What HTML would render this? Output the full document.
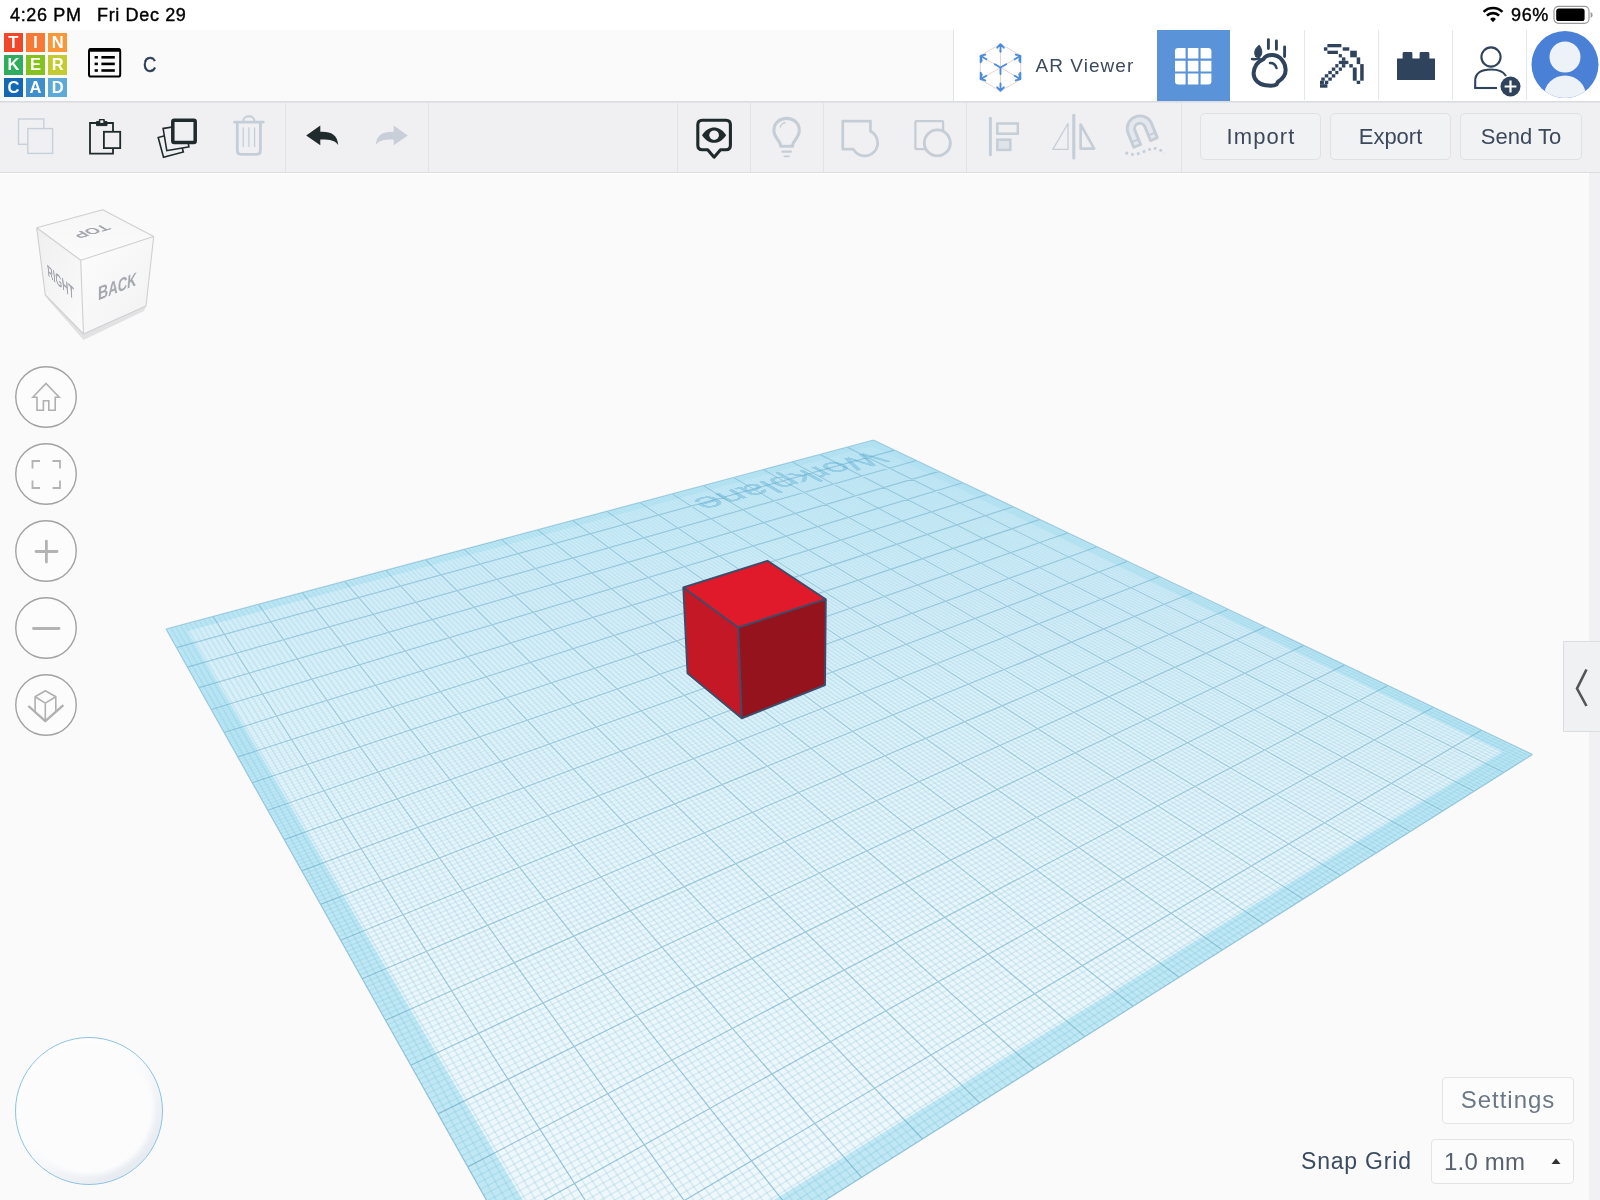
<!DOCTYPE html>
<html lang="en">
<head>
<meta charset="utf-8">
<title>Tinkercad - C</title>
<style>
*{box-sizing:border-box;margin:0;padding:0}
html,body{width:1600px;height:1200px;overflow:hidden;background:#fafafa;font-family:"Liberation Sans",sans-serif;}
body{position:relative}
.abs{position:absolute}
#root{position:absolute;left:0;top:0;width:1600px;height:1200px;overflow:hidden;will-change:transform}
#status{position:absolute;left:0;top:0;width:1600px;height:30px;background:#fff;color:#000;font-size:18px;letter-spacing:0.65px}
#status span{position:absolute;top:5px;line-height:20px;white-space:nowrap;-webkit-text-stroke:0.4px #000}
#header{position:absolute;left:0;top:30px;width:1600px;height:72px;background:#fafafa;border-bottom:1px solid #d9dadc}
#hshadow{position:absolute;left:0;top:101px;width:1600px;height:3px;background:linear-gradient(#d4d6d9,#e6e7ea 60%,#f0f0f2)}
#hright{position:absolute;left:953px;top:0;width:647px;height:71px;background:#fff;border-left:1px solid #e3e4e6}
.hsep{position:absolute;top:0;width:1px;height:70px;background:#e6e7e9}
#toolbar{position:absolute;left:0;top:103px;width:1600px;height:70px;background:#f0f0f2;border-bottom:1px solid #dcdde0}
.tsep{position:absolute;top:0;width:1px;height:69px;background:#e2e3e6}
.btn{position:absolute;top:10px;height:47px;width:121px;border:1px solid #dfe1e5;border-radius:5px;background:#f1f2f4;color:#3c495b;font-size:22px;letter-spacing:0;text-align:center;line-height:45px}
#canvas{position:absolute;left:0;top:173px;width:1600px;height:1027px;background:#fafafa;overflow:hidden}
#rstrip{position:absolute;left:1589px;top:173px;width:11px;height:1027px;background:#f1f1f3}
#toggle{position:absolute;left:1563px;top:641px;width:37px;height:91px;background:#f0f1f3;border:1px solid #dcdde0;border-right:none}
.nav{position:absolute;left:15px;width:62px;height:62px;border-radius:50%;background:#fcfcfc}
.nav svg{position:absolute;left:0;top:0}
.wpwrap{position:absolute;left:0;top:0;width:2000px;height:2000px;transform-origin:0 0;pointer-events:none}
.wptext{position:absolute;left:64px;top:47px;font-size:135px;line-height:135px;color:#4fa3cc;-webkit-text-stroke:2.5px #4fa3cc;opacity:.36;transform:scale(0.965,-1);transform-origin:0 50%;white-space:nowrap;letter-spacing:0}
.vcface{position:absolute;left:0;top:0;width:100px;height:100px;transform-origin:0 0;text-align:center;color:#a4a6ad;font-weight:bold;white-space:nowrap}
#settings{position:absolute;left:1442px;top:1077px;width:132px;height:47px;border:1px solid #e1e3e6;border-radius:4px;background:#fcfcfc;color:#6b7885;font-size:24px;letter-spacing:1px;text-align:center;line-height:44px}
#snaplabel{position:absolute;left:1301px;top:1146px;color:#3b4b60;font-size:23px;letter-spacing:0.8px;line-height:30px;white-space:nowrap}
#snapsel{position:absolute;left:1431px;top:1139px;width:143px;height:45px;border:1px solid #e1e3e6;border-radius:4px;background:#fcfcfc;color:#59626c;font-size:24px;letter-spacing:0.2px;line-height:43px;padding-left:12px}
.lg{position:absolute;width:19.4px;height:19.4px;color:#fff;font-weight:bold;font-size:16.5px;line-height:19.4px;text-align:center}
</style>
</head>
<body>
<div id="root">
<!-- iOS status bar -->
<div id="status">
  <span style="left:10px">4:26 PM</span>
  <span style="left:97px">Fri Dec 29</span>
  <svg class="abs" style="left:1482px;top:6px" width="22" height="17" viewBox="0 0 22 17"><path d="M11 16.2 L8.1 13 A4.2 4.2 0 0 1 13.9 13 Z" fill="#000"/><path d="M4.9 9.6 A8.7 8.7 0 0 1 17.1 9.6" fill="none" stroke="#000" stroke-width="2.6"/><path d="M1.6 5.9 A13.4 13.4 0 0 1 20.4 5.9" fill="none" stroke="#000" stroke-width="2.6"/></svg>
  <span style="left:1511px">96%</span>
  <svg class="abs" style="left:1553px;top:5px" width="42" height="20" viewBox="0 0 42 20"><rect x="1" y="1.3" width="35" height="17" rx="4.5" fill="#fff" stroke="#9a9a9a" stroke-width="1.2"/><rect x="3.2" y="3.6" width="28.4" height="12.4" rx="2.6" fill="#000"/><path d="M37.6 7 A3.2 3.2 0 0 1 37.6 13 Z" fill="#9a9a9a"/></svg>
</div>

<!-- app header -->
<div id="header">
<div class="lg" style="left:3.7px;top:3.1px;background:#f0462a">T</div>
<div class="lg" style="left:25.8px;top:3.1px;background:#f87936">I</div>
<div class="lg" style="left:48px;top:3.1px;background:#f8983b">N</div>
<div class="lg" style="left:3.7px;top:25.4px;background:#2eae5c">K</div>
<div class="lg" style="left:25.8px;top:25.4px;background:#84c31d">E</div>
<div class="lg" style="left:48px;top:25.4px;background:#c4cb30">R</div>
<div class="lg" style="left:3.7px;top:47.8px;background:#1468b3">C</div>
<div class="lg" style="left:25.8px;top:47.8px;background:#3f8fca">A</div>
<div class="lg" style="left:48px;top:47.8px;background:#5caad6">D</div>
<svg class="abs" style="left:86px;top:16px" width="38" height="34" viewBox="0 0 38 34">
  <rect x="3" y="3" width="31.2" height="27.6" rx="2.2" fill="none" stroke="#000" stroke-width="2"/>
  <rect x="3" y="2.2" width="31.2" height="3.6" rx="1" fill="#000"/>
  <rect x="8.6" y="10" width="3.3" height="2.6" fill="#000"/><rect x="15.4" y="10" width="13.4" height="2.6" fill="#000"/>
  <rect x="8.6" y="16.6" width="3.3" height="2.6" fill="#000"/><rect x="15.4" y="16.6" width="13.4" height="2.6" fill="#000"/>
  <rect x="8.6" y="23.2" width="3.3" height="2.6" fill="#000"/><rect x="15.4" y="23.2" width="13.4" height="2.6" fill="#000"/>
</svg>
<div class="abs" style="left:142.500px;top:22px;font-size:22.500px;line-height:26px;color:#2b3c58;-webkit-text-stroke:0.45px #2b3c58;transform:scaleX(0.82);transform-origin:0 50%">C</div>

<div id="hright">
  <!-- AR viewer icon -->
  <svg class="abs" style="left:22px;top:9.5px" width="49" height="55" viewBox="0 0 52 58">
    <g fill="none" stroke="#e3cfd0" stroke-width="1">
      <path d="M26 4 L4.5 16.5 L4.5 41.5 L26 54 L47.500 41.5 L47.5 16.5 Z"/>
      <path d="M26 29 L26 54 M26 29 L4.5 16.5 M26 29 L47.5 16.5 M26 4 L26 29 M4.5 41.5 L26 29 L47.5 41.5"/>
    </g>
    <g fill="none" stroke="#4c8ddb" stroke-width="2" stroke-linecap="round" stroke-linejoin="round">
      <path d="M26 4.600 L26 12 M22.5 8 L26 4.300 L29.5 8"/>
      <path d="M26 53.400 L26 46 M22.5 50 L26 53.700 L29.5 50"/>
      <path d="M5 17 L5 23.500 M5 41 L5 34.500 M47 17 L47 23.500 M47 41 L47 34.500"/>
      <path d="M5 16.800 L11 20.300 M5 16.800 L9.800 15.300 M5 16.800 L6.100 21.800"/>
      <path d="M47 16.800 L41 20.300 M47 16.800 L42.200 15.300 M47 16.800 L45.900 21.800"/>
      <path d="M5 41.200 L11 37.700 M5 41.200 L9.800 42.700 M5 41.200 L6.100 36.200"/>
      <path d="M47 41.200 L41 37.700 M47 41.200 L42.200 42.700 M47 41.200 L45.900 36.200"/>
      <path d="M26 29 L26 36 M26 29 L20 25.500 M26 29 L32 25.500"/>
      <path d="M26 12 L26 12.100"/>
    </g>
  </svg>
  <div class="abs" style="left:81.5px;top:23px;font-size:19px;letter-spacing:1.05px;line-height:26px;color:#3c4a5e;white-space:nowrap">AR Viewer</div>
  <!-- active grid button -->
  <div class="abs" style="left:203px;top:0;width:73px;height:71px;background:#5b93d9">
    <svg class="abs" style="left:17px;top:17px" width="38" height="38" viewBox="0 0 38 38">
      <rect x="1" y="1" width="36.4" height="36.4" rx="3.2" fill="#fff"/>
      <path d="M12.700 0 V38 M25.500 0 V38 M0 12.700 H38 M0 25.500 H38" stroke="#5b93d9" stroke-width="2.2"/>
    </svg>
  </div>
  <div class="hsep" style="left:350px"></div>
  <div class="hsep" style="left:424px"></div>
  <div class="hsep" style="left:498px"></div>
  <div class="hsep" style="left:572px"></div>
  <!-- apple / hand icon -->
  <svg class="abs" style="left:293px;top:6px" width="46" height="56" viewBox="0 0 46 56">
    <g fill="none" stroke="#2f435c" stroke-linecap="round" stroke-linejoin="round">
      <path d="M16.2 23.3 C11 25 6.500 31 6.600 37.500 C6.800 44 12 48.500 18.500 49.300 C22.500 49.800 27 50.200 29.300 48.600 C30.400 47.800 30.200 46.300 31.400 45.500 C35.500 43 38.800 39 38.600 33.500 C38.300 26 33 19.700 26 19.100 C21.500 18.800 18 20.500 16.200 23.300 Z" stroke-width="4"/>
      <path d="M21.400 3.600 V12.600 M29.400 5 V13.200 M37.600 11 V20.500" stroke-width="2.900"/>
      <path d="M23 27 C26 26.800 28.500 28.800 29.500 32" stroke-width="2.500"/>
      <path d="M5 23 C8 23.500 10.500 23.200 12.500 22.500" stroke-width="2.300"/>
    </g>
    <path d="M12.300 9.200 C8.500 12 6.300 15.500 8.800 21 L12.200 21.600 C15.500 18.500 15.800 14.500 12.300 9.200 Z" fill="#2f435c" stroke="#2f435c" stroke-width="1" stroke-linejoin="round"/>
  </svg>
  <!-- pickaxe (pixel art) -->
  <svg class="abs" style="left:366.4px;top:14.0px" width="46" height="46" viewBox="0 0 46 46"><g fill="#2f435c"><rect x="7.4" y="0.0" width="14.0" height="3.3"/><rect x="3.9" y="3.3" width="3.5" height="3.4"/><rect x="22.7" y="3.3" width="6.6" height="3.4"/><rect x="7.4" y="6.7" width="10.5" height="3.3"/><rect x="30.2" y="6.7" width="6.6" height="6.6"/><rect x="18.8" y="10.1" width="3.1" height="3.3"/><rect x="21.9" y="13.4" width="3.5" height="3.4"/><rect x="36.7" y="13.4" width="3.5" height="6.7"/><rect x="18.8" y="16.8" width="9.6" height="3.3"/><rect x="15.3" y="20.1" width="3.1" height="3.4"/><rect x="21.9" y="20.1" width="3.5" height="3.4"/><rect x="29.3" y="20.1" width="3.5" height="3.4"/><rect x="40.2" y="20.1" width="3.5" height="16.6"/><rect x="11.8" y="23.5" width="3.5" height="3.3"/><rect x="18.8" y="23.5" width="3.1" height="3.3"/><rect x="32.8" y="23.5" width="3.9" height="13.2"/><rect x="8.3" y="26.9" width="3.5" height="3.3"/><rect x="15.3" y="26.9" width="3.1" height="3.3"/><rect x="4.8" y="30.2" width="3.5" height="3.3"/><rect x="11.8" y="30.2" width="3.5" height="3.3"/><rect x="1.3" y="33.5" width="3.5" height="3.2"/><rect x="8.3" y="33.5" width="3.5" height="3.2"/><rect x="36.7" y="36.7" width="3.5" height="3.3"/><rect x="0.0" y="36.7" width="3.9" height="3.5"/><rect x="4.8" y="36.7" width="3.5" height="3.3"/><rect x="0.0" y="40.2" width="7.4" height="3.5"/></g></svg>
  <!-- brick -->
  <svg class="abs" style="left:441px;top:20px" width="42" height="32" viewBox="0 0 42 32">
    <path d="M2 8.500 H7.600 V3.400 Q7.600 2 9 2 H16 Q17.400 2 17.400 3.400 V8.500 H24.600 V3.400 Q24.600 2 26 2 H33 Q34.400 2 34.400 3.400 V8.500 H40 V30 H2 Z" fill="#2f435c"/>
  </svg>
  <!-- add person -->
  <svg class="abs" style="left:516px;top:12px" width="56" height="56" viewBox="0 0 56 56">
    <g fill="none" stroke="#2f435c" stroke-width="2.1">
      <circle cx="21" cy="15" r="9.600"/>
      <path d="M5.200 46 V39 C5.200 31.500 11 27.500 21 27.500 C28.500 27.500 33.700 29.800 36 34"/>
      <path d="M4.200 46 H27"/>
    </g>
    <circle cx="40.500" cy="44.500" r="10" fill="#2f435c"/>
    <path d="M40.500 38.600 V50.400 M34.600 44.500 H46.400" stroke="#fff" stroke-width="2.200"/>
  </svg>
  <!-- avatar -->
  <svg class="abs" style="left:576px;top:0" width="70" height="70" viewBox="0 0 70 70">
    <defs><clipPath id="avc"><circle cx="35" cy="34.500" r="33.500"/></clipPath></defs>
    <circle cx="35" cy="34.500" r="33.500" fill="#4a80d6"/>
    <g clip-path="url(#avc)" fill="#edf1f8">
      <circle cx="35" cy="27" r="15.500"/>
      <ellipse cx="35" cy="66" rx="21" ry="20.500"/>
    </g>
  </svg>
</div>

</div>
<div id="hshadow"></div>

<!-- toolbar -->
<div id="toolbar">
<div class="tsep" style="left:285px"></div>
<div class="tsep" style="left:428px"></div>
<div class="tsep" style="left:677px"></div>
<div class="tsep" style="left:750px"></div>
<div class="tsep" style="left:823px"></div>
<div class="tsep" style="left:966px"></div>
<div class="tsep" style="left:1181px"></div>
<svg class="abs" style="left:0;top:0" width="1200" height="70" viewBox="0 0 1200 70">
  <!-- copy (disabled) -->
  <g fill="#f0f0f2" stroke="#c7d0da" stroke-width="1.4">
    <rect x="18.500" y="16" width="25.300" height="25.300"/>
    <rect x="27.800" y="25.600" width="24.800" height="24.800"/>
  </g>
  <!-- paste -->
  <g fill="#f0f0f2" stroke="#1f2a2d" stroke-width="1.8" stroke-linejoin="miter">
    <path d="M96 20 H90 V50.600 H113 V20 H107"/>
    <path d="M96.500 22.600 V18.600 H99.300 V16.500 H104.300 V18.600 H107 V22.600 Z" fill="#1f2a2d" stroke-width="1"/>
    <rect x="100.300" y="17.300" width="3" height="2.600" fill="#f0f0f2" stroke="none"/>
    <rect x="103.900" y="28.800" width="16.300" height="16.300"/>
  </g>
  <!-- duplicate -->
  <g fill="#f0f0f2" stroke="#1f2a2d" stroke-width="1.6">
    <rect x="160.500" y="31.500" width="20.500" height="20.500" transform="rotate(-15 170.700 41.700)"/>
    <rect x="164.800" y="23.500" width="22.400" height="22.400" transform="rotate(-9.500 176 34.700)"/>
    <rect x="172.800" y="17.200" width="22.400" height="22.400" stroke-width="3.500" rx="1.500"/>
  </g>
  <!-- trash (disabled) -->
  <g fill="none" stroke="#c4ced9" stroke-linecap="round">
    <path d="M234.500 19.200 H263.200" stroke-width="2.800"/>
    <path d="M243.300 18 C243.300 11.800 254.400 11.800 254.400 18" stroke-width="2"/>
    <path d="M237.300 21 V47.500 Q237.300 51.300 241 51.300 H256.700 Q260.400 51.300 260.400 47.500 V21" stroke-width="2.800"/>
    <path d="M243.200 25 V43.500 M248.900 25 V43.500 M254.600 25 V43.500" stroke-width="1.300"/>
  </g>
  <!-- undo -->
  <path d="M306.200 32.500 L320.300 22.500 V28.700 C331 28.300 337.500 31.500 338.200 42 C335 37.500 330.500 36.400 320.300 36.500 V42.300 Z" fill="#1f2b2d"/>
  <!-- redo (disabled) -->
  <path d="M407.800 32.500 L393.700 22.500 V28.700 C383 28.300 376.500 31.500 375.800 42 C379 37.500 383.500 36.400 393.700 36.500 V42.300 Z" fill="#c8cfd9"/>
  <!-- notes / eye -->
  <g>
    <path d="M702.300 17.300 H725.900 Q730.400 17.300 730.400 21.800 V42.300 Q730.400 46.800 725.900 46.800 H720.500 L714.100 54.200 L707.700 46.800 H702.300 Q697.800 46.800 697.800 42.300 V21.800 Q697.800 17.300 702.300 17.300 Z" fill="#f0f0f2" stroke="#1f2a2d" stroke-width="3.100" stroke-linejoin="round"/>
    <path d="M702 32.200 C706 26.500 710 24.600 714.100 24.600 C718.200 24.600 722.200 26.500 726.200 32.200 C722.200 37.900 718.200 39.800 714.100 39.800 C710 39.800 706 37.900 702 32.200 Z" fill="#1f2a2d"/>
    <circle cx="714.100" cy="32.200" r="4.800" fill="#f0f0f2"/>
  </g>
  <!-- lightbulb (disabled) -->
  <g fill="none" stroke="#c5cdd7" stroke-linecap="round">
    <path d="M780.700 43.300 C780.700 37.500 773.900 35.300 773.900 27.300 C773.900 20.300 779.700 15.400 786.600 15.400 C793.500 15.400 799.300 20.300 799.300 27.300 C799.300 35.300 792.500 37.500 792.500 43.300 Z" stroke-width="3.100" stroke-linejoin="round"/>
    <path d="M780.300 24 C781.100 21.600 783 20 785.300 19.600" stroke-width="1.300"/>
    <path d="M782.300 48.700 H790.900" stroke-width="2.300"/><path d="M784.300 53.300 H788.900" stroke-width="1.800"/>
  </g>
  <!-- group (disabled) -->
  <path d="M842.750 18.200 H870.450 V28.260 A13 13 0 1 1 853.280 46.200 H842.750 Z" fill="none" stroke="#c5cdd7" stroke-width="2.700" stroke-linejoin="round"/>
  <!-- ungroup (disabled) -->
  <g fill="#f0f0f2" stroke="#c5cdd7">
    <rect x="915.400" y="18.200" width="27.700" height="28" stroke-width="2.300" rx="1"/>
    <circle cx="937.300" cy="39.900" r="13" stroke-width="2.900"/>
  </g>
  <!-- align (disabled) -->
  <g fill="none" stroke="#c5cdd7" stroke-width="2.500">
    <path d="M990.400 15.300 V51.700" stroke-linecap="round" stroke-width="3"/>
    <rect x="997.300" y="20.500" width="20.500" height="10.200"/>
    <rect x="997.300" y="36.700" width="13" height="10.200" fill="#dfe4ea"/>
  </g>
  <!-- mirror (disabled) -->
  <g fill="none" stroke="#c5cdd7" stroke-linejoin="round">
    <path d="M1073.800 12.300 V55" stroke-width="3.100" stroke-linecap="round"/>
    <path d="M1052.800 46.400 H1068 V20.500 Z" stroke-width="1.300"/>
    <path d="M1080.600 21.500 V45.600 H1094.200 Z" stroke-width="2.600"/>
  </g>
  <!-- cruise / magnet (disabled) -->
  <g fill="none" stroke="#c5cdd7">
    <g transform="translate(-3.500 -2) rotate(-22 1144 29)">
      <path d="M1131.300 42.500 V27.500 A12.700 12.700 0 0 1 1156.700 27.500 V42.500 H1149.300 V27.500 A5.300 5.300 0 0 0 1138.700 27.500 V42.500 Z" stroke-width="2.900" stroke-linejoin="round" fill="#e4e8ee"/>
      <path d="M1131.300 37 H1138.700 M1149.300 37 H1156.700" stroke-width="2"/>
    </g>
    <path d="M1125.500 49.500 C1134 54.500 1144 48 1152 45.500 C1157 44.500 1161.500 47.500 1164.500 50.500" stroke-width="2.700" stroke-dasharray="2.700 3.200" stroke-linecap="butt"/>
  </g>
</svg>
<div class="btn" style="left:1200px;letter-spacing:1.100px;padding-left:1px">Import</div>
<div class="btn" style="left:1330px">Export</div>
<div class="btn" style="left:1460px;width:122px">Send To</div>

</div>

<!-- 3D canvas -->
<div id="canvas">
<svg class="abs" style="left:0;top:-173px" width="1600" height="1373" viewBox="0 0 1600 1373">
<defs><linearGradient id="pg" gradientUnits="userSpaceOnUse" x1="0" y1="440" x2="0" y2="1373"><stop offset="0.0000" stop-color="#bee7f5"/><stop offset="0.0322" stop-color="#c3e8f6"/><stop offset="0.0643" stop-color="#c7eaf7"/><stop offset="0.1072" stop-color="#ccecf7"/><stop offset="0.1501" stop-color="#d1edf8"/><stop offset="0.2036" stop-color="#d6eff9"/><stop offset="0.2680" stop-color="#dcf2fa"/><stop offset="0.3430" stop-color="#e1f3fa"/><stop offset="0.4287" stop-color="#e6f5fb"/><stop offset="0.5252" stop-color="#eaf6fb"/><stop offset="0.6324" stop-color="#ecf7fb"/><stop offset="0.7395" stop-color="#eef7fb"/><stop offset="0.8682" stop-color="#eff7fa"/><stop offset="1.0000" stop-color="#f1f7fa"/></linearGradient>
<linearGradient id="bg" gradientUnits="userSpaceOnUse" x1="0" y1="440" x2="0" y2="1373"><stop offset="0" stop-color="#48bee0" stop-opacity="0.07"/><stop offset="0.12" stop-color="#48bee0" stop-opacity="0.13"/><stop offset="0.3" stop-color="#48bee0" stop-opacity="0.25"/><stop offset="1" stop-color="#48bee0" stop-opacity="0.29"/></linearGradient>
<linearGradient id="mgu" gradientUnits="userSpaceOnUse" x1="0" y1="440" x2="0" y2="1373"><stop offset="0.0000" stop-color="#6cb4d0" stop-opacity="0.08"/><stop offset="0.0643" stop-color="#6cb4d0" stop-opacity="0.11"/><stop offset="0.1286" stop-color="#6cb4d0" stop-opacity="0.14"/><stop offset="0.2036" stop-color="#6cb4d0" stop-opacity="0.17"/><stop offset="0.2787" stop-color="#6cb4d0" stop-opacity="0.20"/><stop offset="0.3859" stop-color="#6cb4d0" stop-opacity="0.21"/><stop offset="0.4930" stop-color="#6cb4d0" stop-opacity="0.21"/><stop offset="0.6538" stop-color="#6cb4d0" stop-opacity="0.21"/><stop offset="0.8146" stop-color="#6cb4d0" stop-opacity="0.20"/><stop offset="1.0000" stop-color="#6cb4d0" stop-opacity="0.20"/></linearGradient>
<linearGradient id="mgv" gradientUnits="userSpaceOnUse" x1="0" y1="440" x2="0" y2="1373"><stop offset="0.0000" stop-color="#6cb4d0" stop-opacity="0.00"/><stop offset="0.0643" stop-color="#6cb4d0" stop-opacity="0.01"/><stop offset="0.1286" stop-color="#6cb4d0" stop-opacity="0.01"/><stop offset="0.2036" stop-color="#6cb4d0" stop-opacity="0.04"/><stop offset="0.2787" stop-color="#6cb4d0" stop-opacity="0.07"/><stop offset="0.3859" stop-color="#6cb4d0" stop-opacity="0.12"/><stop offset="0.4930" stop-color="#6cb4d0" stop-opacity="0.18"/><stop offset="0.6538" stop-color="#6cb4d0" stop-opacity="0.19"/><stop offset="0.8146" stop-color="#6cb4d0" stop-opacity="0.20"/><stop offset="1.0000" stop-color="#6cb4d0" stop-opacity="0.20"/></linearGradient>
<linearGradient id="mj" gradientUnits="userSpaceOnUse" x1="0" y1="440" x2="0" y2="1373"><stop offset="0" stop-color="#569fbe" stop-opacity="0.42"/><stop offset="0.45" stop-color="#569fbe" stop-opacity="0.5"/><stop offset="1" stop-color="#569fbe" stop-opacity="0.62"/></linearGradient>
</defs>
<polygon points="873.5,440 166,629 575,1358 1532.5,754.5" fill="url(#pg)"/>
<path d="M870.9 440.7L1529.7 756.3M868.3 441.4L1526.9 758M865.6 442.1L1524 759.8M863 442.8L1521.2 761.6M860.3 443.5L1518.3 763.4M857.7 444.2L1515.5 765.2M855 444.9L1512.6 767M852.3 445.7L1509.7 768.9M849.7 446.4L1506.8 770.7M844.3 447.8L1501 774.4M841.6 448.5L1498 776.2M838.9 449.2L1495.1 778.1M836.2 450L1492.1 780M833.5 450.7L1489.1 781.8M830.7 451.4L1486.1 783.7M828 452.2L1483.1 785.6M825.3 452.9L1480.1 787.5M822.5 453.6L1477.1 789.4M817 455.1L1471 793.3M814.2 455.8L1467.9 795.2M811.5 456.6L1464.8 797.1M808.7 457.3L1461.7 799.1M805.9 458.1L1458.6 801.1M803.1 458.8L1455.5 803M800.3 459.6L1452.4 805M797.5 460.3L1449.2 807M794.6 461.1L1446.1 809M789 462.6L1439.7 813M786.1 463.3L1436.5 815M783.3 464.1L1433.3 817.1M780.4 464.9L1430 819.1M777.6 465.6L1426.8 821.1M774.7 466.4L1423.5 823.2M771.8 467.2L1420.2 825.3M768.9 467.9L1416.9 827.3M766 468.7L1413.6 829.4M760.2 470.3L1407 833.6M757.3 471.1L1403.6 835.7M754.3 471.8L1400.2 837.9M751.4 472.6L1396.8 840M748.4 473.4L1393.4 842.1M745.5 474.2L1390 844.3M742.5 475L1386.6 846.5M739.5 475.8L1383.2 848.6M736.6 476.6L1379.7 850.8M730.6 478.2L1372.7 855.2M727.6 479L1369.2 857.4M724.6 479.8L1365.7 859.6M721.5 480.6L1362.1 861.9M718.5 481.4L1358.6 864.1M715.5 482.2L1355 866.4M712.4 483L1351.4 868.6M709.4 483.9L1347.8 870.9M706.3 484.7L1344.2 873.2M700.1 486.3L1336.8 877.8M697 487.1L1333.2 880.1M693.9 488L1329.5 882.5M690.8 488.8L1325.8 884.8M687.7 489.6L1322 887.2M684.6 490.5L1318.3 889.5M681.4 491.3L1314.5 891.9M678.3 492.1L1310.7 894.3M675.1 493L1306.9 896.7M668.8 494.7L1299.2 901.5M665.6 495.5L1295.4 904M662.4 496.4L1291.5 906.4M659.2 497.2L1287.6 908.9M656 498.1L1283.7 911.3M652.8 499L1279.7 913.8M649.6 499.8L1275.8 916.3M646.4 500.7L1271.8 918.8M643.1 501.5L1267.8 921.3M636.6 503.3L1259.7 926.4M633.3 504.2L1255.7 929M630 505L1251.6 931.5M626.7 505.9L1247.5 934.1M623.4 506.8L1243.4 936.7M620.1 507.7L1239.3 939.3M616.8 508.6L1235.1 942M613.5 509.5L1230.9 944.6M610.1 510.4L1226.7 947.2M603.4 512.2L1218.2 952.6M600 513.1L1214 955.3M596.7 514L1209.7 958M593.3 514.9L1205.4 960.7M589.9 515.8L1201 963.4M586.4 516.7L1196.7 966.2M583 517.6L1192.3 968.9M579.6 518.5L1187.9 971.7M576.1 519.4L1183.5 974.5M569.2 521.3L1174.6 980.1M565.8 522.2L1170.1 982.9M562.3 523.1L1165.5 985.8M558.8 524.1L1161 988.7M555.3 525L1156.4 991.5M551.8 525.9L1151.8 994.4M548.2 526.9L1147.2 997.3M544.7 527.8L1142.6 1000.3M541.1 528.8L1137.9 1003.2M534 530.7L1128.5 1009.1M530.4 531.6L1123.8 1012.1M526.8 532.6L1119 1015.1M523.2 533.6L1114.2 1018.1M519.6 534.5L1109.4 1021.2M516 535.5L1104.6 1024.2M512.4 536.5L1099.7 1027.3M508.7 537.4L1094.8 1030.4M505.1 538.4L1089.9 1033.5M497.7 540.4L1079.9 1039.8M494 541.4L1074.9 1042.9M490.3 542.4L1069.9 1046.1M486.6 543.4L1064.8 1049.3M482.9 544.3L1059.7 1052.5M479.1 545.3L1054.6 1055.7M475.4 546.4L1049.5 1059M471.6 547.4L1044.3 1062.2M467.9 548.4L1039.1 1065.5M460.3 550.4L1028.6 1072.1M456.5 551.4L1023.3 1075.5M452.6 552.4L1017.9 1078.8M448.8 553.5L1012.6 1082.2M445 554.5L1007.2 1085.6M441.1 555.5L1001.8 1089M437.2 556.5L996.3 1092.4M433.4 557.6L990.8 1095.9M429.5 558.6L985.3 1099.4M421.6 560.7L974.2 1106.4M417.7 561.8L968.6 1109.9M413.8 562.8L962.9 1113.5M409.8 563.9L957.3 1117.1M405.8 564.9L951.6 1120.7M401.9 566L945.8 1124.3M397.9 567.1L940 1127.9M393.9 568.1L934.2 1131.6M389.8 569.2L928.4 1135.3M381.7 571.4L916.6 1142.7M377.7 572.4L910.6 1146.5M373.6 573.5L904.6 1150.3M369.5 574.6L898.6 1154.1M365.4 575.7L892.5 1157.9M361.3 576.8L886.4 1161.7M357.2 577.9L880.3 1165.6M353 579L874.1 1169.5M348.9 580.1L867.9 1173.4M340.5 582.4L855.3 1181.3M336.4 583.5L849 1185.3M332.1 584.6L842.6 1189.3M327.9 585.7L836.2 1193.4M323.7 586.9L829.7 1197.4M319.4 588L823.2 1201.5M315.2 589.2L816.7 1205.7M310.9 590.3L810.1 1209.8M306.6 591.4L803.5 1214M298 593.7L790.1 1222.4M293.6 594.9L783.4 1226.7M289.3 596.1L776.6 1230.9M284.9 597.2L769.8 1235.2M280.5 598.4L762.9 1239.6M276.1 599.6L756 1243.9M271.7 600.8L749 1248.3M267.3 601.9L742 1252.8M262.9 603.1L734.9 1257.2M253.9 605.5L720.6 1266.2M249.4 606.7L713.4 1270.8M244.9 607.9L706.2 1275.3M240.4 609.1L698.9 1279.9M235.9 610.3L691.5 1284.6M231.3 611.5L684.1 1289.2M226.8 612.8L676.7 1293.9M222.2 614L669.2 1298.6M217.6 615.2L661.6 1303.4M208.4 617.7L646.4 1313M203.7 618.9L638.6 1317.9M199.1 620.2L630.9 1322.8M194.4 621.4L623.1 1327.7M189.7 622.7L615.2 1332.7M185 623.9L607.3 1337.7M180.3 625.2L599.3 1342.7M175.5 626.5L591.2 1347.8M170.8 627.7L583.2 1352.9" stroke="url(#mgu)" stroke-width="1.5" fill="none"/>
<path d="M875.6 441L167 630.8M877.7 442L168 632.6M879.7 443L169.1 634.5M881.8 444L170.1 636.3M883.9 445L171.1 638.2M886 446L172.2 640M888.2 447L173.2 641.9M890.3 448L174.3 643.8M892.4 449L175.4 645.7M896.7 451.1L177.5 649.5M898.9 452.1L178.6 651.4M901.1 453.1L179.6 653.3M903.2 454.2L180.7 655.3M905.4 455.2L181.8 657.2M907.6 456.3L182.9 659.2M909.8 457.3L184 661.1M912 458.4L185.1 663.1M914.2 459.4L186.3 665.1M918.7 461.6L188.5 669.1M920.9 462.6L189.7 671.2M923.2 463.7L190.8 673.2M925.5 464.8L191.9 675.2M927.7 465.9L193.1 677.3M930 467L194.3 679.4M932.3 468.1L195.4 681.4M934.6 469.2L196.6 683.5M936.9 470.3L197.8 685.6M941.5 472.5L200.1 689.9M943.9 473.6L201.3 692M946.2 474.7L202.6 694.1M948.6 475.8L203.8 696.3M950.9 477L205 698.5M953.3 478.1L206.2 700.7M955.7 479.2L207.4 702.9M958.1 480.4L208.7 705.1M960.5 481.5L209.9 707.3M965.3 483.8L212.4 711.8M967.7 485L213.7 714M970.2 486.1L215 716.3M972.6 487.3L216.3 718.6M975.1 488.5L217.5 720.9M977.5 489.7L218.8 723.2M980 490.8L220.1 725.5M982.5 492L221.4 727.8M985 493.2L222.8 730.2M990 495.6L225.4 734.9M992.6 496.8L226.8 737.3M995.1 498L228.1 739.7M997.7 499.3L229.5 742.1M1000.2 500.5L230.8 744.6M1002.8 501.7L232.2 747M1005.4 502.9L233.6 749.5M1008 504.2L235 751.9M1010.6 505.4L236.4 754.4M1015.8 507.9L239.2 759.4M1018.5 509.2L240.6 762M1021.1 510.4L242 764.5M1023.8 511.7L243.5 767.1M1026.4 513L244.9 769.7M1029.1 514.3L246.4 772.3M1031.8 515.6L247.8 774.9M1034.5 516.8L249.3 777.5M1037.2 518.1L250.8 780.2M1042.7 520.8L253.8 785.5M1045.5 522.1L255.3 788.2M1048.2 523.4L256.8 790.9M1051 524.7L258.4 793.6M1053.8 526L259.9 796.4M1056.6 527.4L261.4 799.1M1059.4 528.7L263 801.9M1062.2 530.1L264.6 804.7M1065.1 531.4L266.1 807.5M1070.8 534.1L269.3 813.2M1073.6 535.5L270.9 816M1076.5 536.9L272.6 818.9M1079.4 538.3L274.2 821.8M1082.3 539.7L275.8 824.7M1085.3 541.1L277.5 827.7M1088.2 542.5L279.1 830.6M1091.2 543.9L280.8 833.6M1094.1 545.3L282.5 836.6M1100.1 548.1L285.9 842.7M1103.1 549.6L287.6 845.7M1106.1 551L289.3 848.8M1109.1 552.5L291.1 851.9M1112.2 553.9L292.8 855M1115.3 555.4L294.6 858.1M1118.3 556.8L296.3 861.3M1121.4 558.3L298.1 864.5M1124.5 559.8L299.9 867.7M1130.8 562.8L303.5 874.1M1133.9 564.3L305.4 877.4M1137.1 565.8L307.2 880.7M1140.2 567.3L309.1 884M1143.4 568.8L310.9 887.3M1146.6 570.3L312.8 890.7M1149.8 571.9L314.7 894.1M1153.1 573.4L316.6 897.5M1156.3 575L318.6 900.9M1162.9 578.1L322.4 907.8M1166.2 579.7L324.4 911.3M1169.5 581.2L326.4 914.8M1172.8 582.8L328.4 918.4M1176.1 584.4L330.4 922M1179.5 586L332.4 925.6M1182.9 587.6L334.4 929.2M1186.3 589.3L336.5 932.8M1189.7 590.9L338.5 936.5M1196.5 594.2L342.7 943.9M1200 595.8L344.8 947.7M1203.4 597.5L346.9 951.5M1206.9 599.1L349.1 955.3M1210.4 600.8L351.2 959.1M1214 602.5L353.4 963M1217.5 604.2L355.6 966.9M1221 605.9L357.8 970.8M1224.6 607.6L360 974.8M1231.8 611L364.5 982.8M1235.4 612.7L366.8 986.8M1239.1 614.5L369 990.9M1242.8 616.2L371.3 995M1246.4 618L373.7 999.1M1250.1 619.7L376 1003.3M1253.8 621.5L378.4 1007.5M1257.6 623.3L380.7 1011.7M1261.3 625.1L383.1 1016M1268.9 628.7L388 1024.6M1272.7 630.5L390.4 1029M1276.5 632.4L392.9 1033.4M1280.4 634.2L395.4 1037.8M1284.3 636L397.9 1042.3M1288.2 637.9L400.4 1046.8M1292.1 639.8L403 1051.4M1296 641.6L405.5 1055.9M1300 643.5L408.1 1060.6M1307.9 647.3L413.4 1069.9M1311.9 649.2L416 1074.6M1316 651.2L418.7 1079.4M1320 653.1L421.4 1084.2M1324.1 655L424.1 1089.1M1328.2 657L426.9 1093.9M1332.3 659L429.6 1098.9M1336.4 660.9L432.4 1103.8M1340.6 662.9L435.2 1108.8M1349 666.9L440.9 1119M1353.2 668.9L443.8 1124.1M1357.5 671L446.7 1129.3M1361.8 673L449.6 1134.5M1366 675.1L452.6 1139.8M1370.4 677.1L455.6 1145.1M1374.7 679.2L458.6 1150.5M1379.1 681.3L461.6 1155.9M1383.5 683.4L464.7 1161.4M1392.3 687.6L470.9 1172.4M1396.8 689.7L474 1178M1401.3 691.9L477.2 1183.7M1405.8 694L480.4 1189.4M1410.3 696.2L483.6 1195.1M1414.9 698.4L486.9 1201M1419.5 700.6L490.2 1206.8M1424.1 702.8L493.5 1212.7M1428.7 705L496.8 1218.7M1438.1 709.4L503.6 1230.8M1442.8 711.7L507.1 1236.9M1447.5 714L510.5 1243.1M1452.3 716.2L514.1 1249.4M1457.1 718.5L517.6 1255.7M1461.9 720.8L521.2 1262.1M1466.8 723.1L524.8 1268.5M1471.7 725.5L528.4 1275M1476.6 727.8L532.1 1281.5M1486.5 732.5L539.6 1294.8M1491.5 734.9L543.3 1301.6M1496.5 737.3L547.2 1308.4M1501.6 739.7L551 1315.3M1506.6 742.2L554.9 1322.2M1511.7 744.6L558.9 1329.2M1516.9 747.1L562.8 1336.3M1522.1 749.5L566.8 1343.5M1527.3 752L570.9 1350.7" stroke="url(#mgv)" stroke-width="1.5" fill="none"/>
<path d="M873.5 440L166 629L575 1358L1532.5 754.5Z M871.4 446.3L187.5 631L589.6 1313.2L1502.8 751.8Z" fill="url(#bg)" fill-rule="evenodd"/>
<path d="M873.5 440L1532.5 754.5M873.5 440L166 629M847 447.1L1503.9 772.5M894.6 450.1L176.4 647.6M819.8 454.4L1474 791.3M916.5 460.5L187.4 667.1M791.8 461.8L1442.9 811M939.2 471.4L199 687.7M763.1 469.5L1410.3 831.5M962.9 482.7L211.2 709.5M733.6 477.4L1376.2 853M987.5 494.4L224.1 732.5M703.2 485.5L1340.5 875.5M1013.2 506.7L237.8 756.9M672 493.8L1303.1 899.1M1040 519.4L252.3 782.8M639.9 502.4L1263.8 923.9M1067.9 532.8L267.7 810.3M606.8 511.3L1222.5 949.9M1097.1 546.7L284.2 839.6M572.7 520.4L1179 977.3M1127.6 561.3L301.7 870.9M537.6 529.7L1133.2 1006.2M1159.6 576.5L320.5 904.4M501.4 539.4L1084.9 1036.6M1193.1 592.5L340.6 940.2M464.1 549.4L1033.8 1068.8M1228.2 609.3L362.2 978.8M425.6 559.7L979.8 1102.9M1265.1 626.9L385.5 1020.3M385.8 570.3L922.5 1139M1303.9 645.4L410.7 1065.2M344.7 581.3L861.6 1177.4M1344.8 664.9L438 1113.9M302.3 592.6L796.8 1218.2M1387.9 685.5L467.8 1166.9M258.4 604.3L727.8 1261.7M1433.4 707.2L500.2 1224.7M213 616.4L654 1308.2M1481.5 730.2L535.8 1288.1M166 629L575 1358M1532.5 754.5L575 1358" stroke="url(#mj)" stroke-width="1.2" fill="none"/>
</svg>
<div class="abs" style="left:0;top:-173px;width:1600px;height:1373px"><div class="wpwrap" style="transform:matrix3d(-0.37536057,0.012614162,0,-0.00013018416,0.044214406,0.016794548,0,-0.00018615699,0,0,1,0,873.5,440,0,1)"><div class="wptext">Workplane</div></div></div>
<svg class="abs" style="left:0;top:-173px" width="1600" height="1373" viewBox="0 0 1600 1373">
<polygon points="767.5,560.8 825.8,599.2 738.3,627.5 683.3,587.5" fill="#e01a2b"/>
<polygon points="683.3,587.5 738.3,627.5 741.7,718.3 687.5,673.3" fill="#c41826"/>
<polygon points="738.3,627.5 825.8,599.2 825,685 741.7,718.3" fill="#95131c"/>
<path d="M767.5 560.8L825.8 599.2L825 685L741.7 718.3L687.5 673.3L683.3 587.5 Z M738.3 627.5 L683.3 587.5 M738.3 627.5 L825.8 599.2 M738.3 627.5 L741.7 718.3" fill="none" stroke="#3b4d6b" stroke-width="1.9" stroke-linejoin="round"/>
</svg>
<svg class="abs" style="left:0;top:0" width="200" height="200" viewBox="0 0 200 200">
<defs><linearGradient id="vg1" x1="0" y1="0" x2="1" y2="1"><stop offset="0" stop-color="#efeff0"/><stop offset="1" stop-color="#fbfbfb"/></linearGradient><linearGradient id="vg2" x1="0" y1="0" x2="1" y2="1"><stop offset="0" stop-color="#fdfdfd"/><stop offset="1" stop-color="#f1f1f2"/></linearGradient><linearGradient id="vg3" x1="0" y1="0" x2="0" y2="1"><stop offset="0" stop-color="#f6f6f7"/><stop offset="1" stop-color="#fbfbfb"/></linearGradient></defs>
<polygon points="45.3,122 83.5,161 146,133 144,138 83.5,167 48.3,127" fill="#dcdcde" opacity="0.8"/>
<polygon points="36.7,54.7 102.7,36.7 153.7,63.5 80.7,87.3" fill="url(#vg3)"/>
<polygon points="36.7,54.7 80.7,87.3 83.5,161 45.3,122" fill="url(#vg1)"/>
<polygon points="80.7,87.3 153.7,63.5 146,133 83.5,161" fill="url(#vg2)"/>
<path d="M36.7 54.7L102.7 36.7L153.7 63.5L146 133L83.5 161L45.3 122 Z M80.7 87.3 L36.7 54.7 M80.7 87.3 L153.7 63.5 M80.7 87.3 L83.5 161" fill="none" stroke="#cfcfd2" stroke-width="1.1" stroke-linejoin="round"/>
</svg>
<div class="vcface" style="transform:matrix3d(-0.80040277,0.16183938,0,-0.00087240114,-0.34134536,-0.20773101,0,0.0016422068,0,0,1,0,153.7,63.5,0,1);font-size:23px;line-height:100px;padding-top:3px">TOP</div>
<div class="vcface" style="transform:matrix3d(0.29963817,0.17415876,0,-0.001739304,0.16055532,0.87378917,0,0.0016458129,0,0,1,0,36.7,54.7,0,1);font-size:25px;line-height:102px;"><span style="display:inline-block;transform:scaleX(0.85)">RIGHT</span></div>
<div class="vcface" style="transform:matrix3d(0.93719705,-0.1523981,0,0.0013480615,0.18214778,1.0342191,0,0.0018460812,0,0,1,0,80.7,87.3,0,1);font-size:27px;line-height:101px;"><span style="display:inline-block;transform:scaleX(0.73)">BACK</span></div>
<!-- canvas-relative coordinates: y_abs - 173 -->
<div class="nav" style="top:193px"><svg width="62" height="62" viewBox="-1.5 -1.5 62 62"><circle cx="29.5" cy="29.5" r="30.250" fill="none" stroke="#a2a2a2" stroke-width="1.400"/><path d="M16.300 29.800 L29.500 15.900 L42.700 29.800 H38.700 V42.700 H32.300 V33.300 H26.900 V42.700 H20.500 V29.800 Z" fill="none" stroke="#b0b0b0" stroke-width="1.600" stroke-linejoin="miter"/></svg></div>
<div class="nav" style="top:270px"><svg width="62" height="62" viewBox="-1.5 -1.5 62 62"><circle cx="29.5" cy="29.5" r="30.250" fill="none" stroke="#a2a2a2" stroke-width="1.400"/><path d="M16 24 V16.500 H23.500 M36 16.500 H43.500 V24 M43.500 36 V43.500 H36 M23.500 43.500 H16 V36" fill="none" stroke="#b3b3b3" stroke-width="1.800"/></svg></div>
<div class="nav" style="top:347px"><svg width="62" height="62" viewBox="-1.5 -1.5 62 62"><circle cx="29.5" cy="29.5" r="30.250" fill="none" stroke="#a2a2a2" stroke-width="1.400"/><path d="M19.500 30 H40.500 M29.900 19.600 V40.600" fill="none" stroke="#b3b3b3" stroke-width="2.800" stroke-linecap="round"/></svg></div>
<div class="nav" style="top:424px"><svg width="62" height="62" viewBox="-1.5 -1.5 62 62"><circle cx="29.5" cy="29.5" r="30.250" fill="none" stroke="#a2a2a2" stroke-width="1.400"/><path d="M17 30 H42.500" fill="none" stroke="#b3b3b3" stroke-width="2.800" stroke-linecap="round"/></svg></div>
<div class="nav" style="top:501px"><svg width="62" height="62" viewBox="-2.1 -2.5 62 62"><circle cx="28.9" cy="28.5" r="30.250" fill="none" stroke="#a2a2a2" stroke-width="1.400"/><g fill="none" stroke="#b0b0b0" stroke-width="1.600" stroke-linejoin="round" stroke-linecap="round"><path d="M28.200 14.300 L38.700 20.200 V35 M28.200 14.300 L18 20.200 V35.300 M18 20.200 L28.200 26.600 L38.700 20.200 M28.200 26.600 V44.400"/><path d="M11.300 29.500 L28.200 44.700 L46.300 28.600" stroke-width="2.300" stroke-linecap="butt"/></g></svg></div>
<!-- joystick -->
<div class="abs" style="left:15px;top:864px;width:148px;height:148px;border-radius:50%;border:1.400px solid #8cc2e3;background:linear-gradient(140deg,#fefefe 0,#fbfcfd 45%,#eef1f5 70%,#dfe5ec 100%)"></div>
<div class="abs" style="left:25px;top:873px;width:126px;height:126px;border-radius:50%;background:#fcfcfd;box-shadow:0 0 5px 3px #fcfcfd"></div>

</div>
<div class="abs" style="left:0;top:173px;width:1589px;height:1px;background:#fff"></div>
<div id="rstrip"></div>
<div id="toggle"><svg width="37" height="91" viewBox="0 0 37 91"><path d="M22.5 27.5 L13 46.5 L22.5 64" fill="none" stroke="#555" stroke-width="2.6"/></svg></div>
<div id="settings">Settings</div>
<div id="snaplabel">Snap Grid</div>
<div id="snapsel">1.0 mm<svg class="abs" style="left:118px;top:17px" width="12" height="8" viewBox="0 0 12 8"><path d="M1.5 7 L6 1.5 L10.5 7 Z" fill="#333"/></svg></div>
</div>
</body>
</html>
